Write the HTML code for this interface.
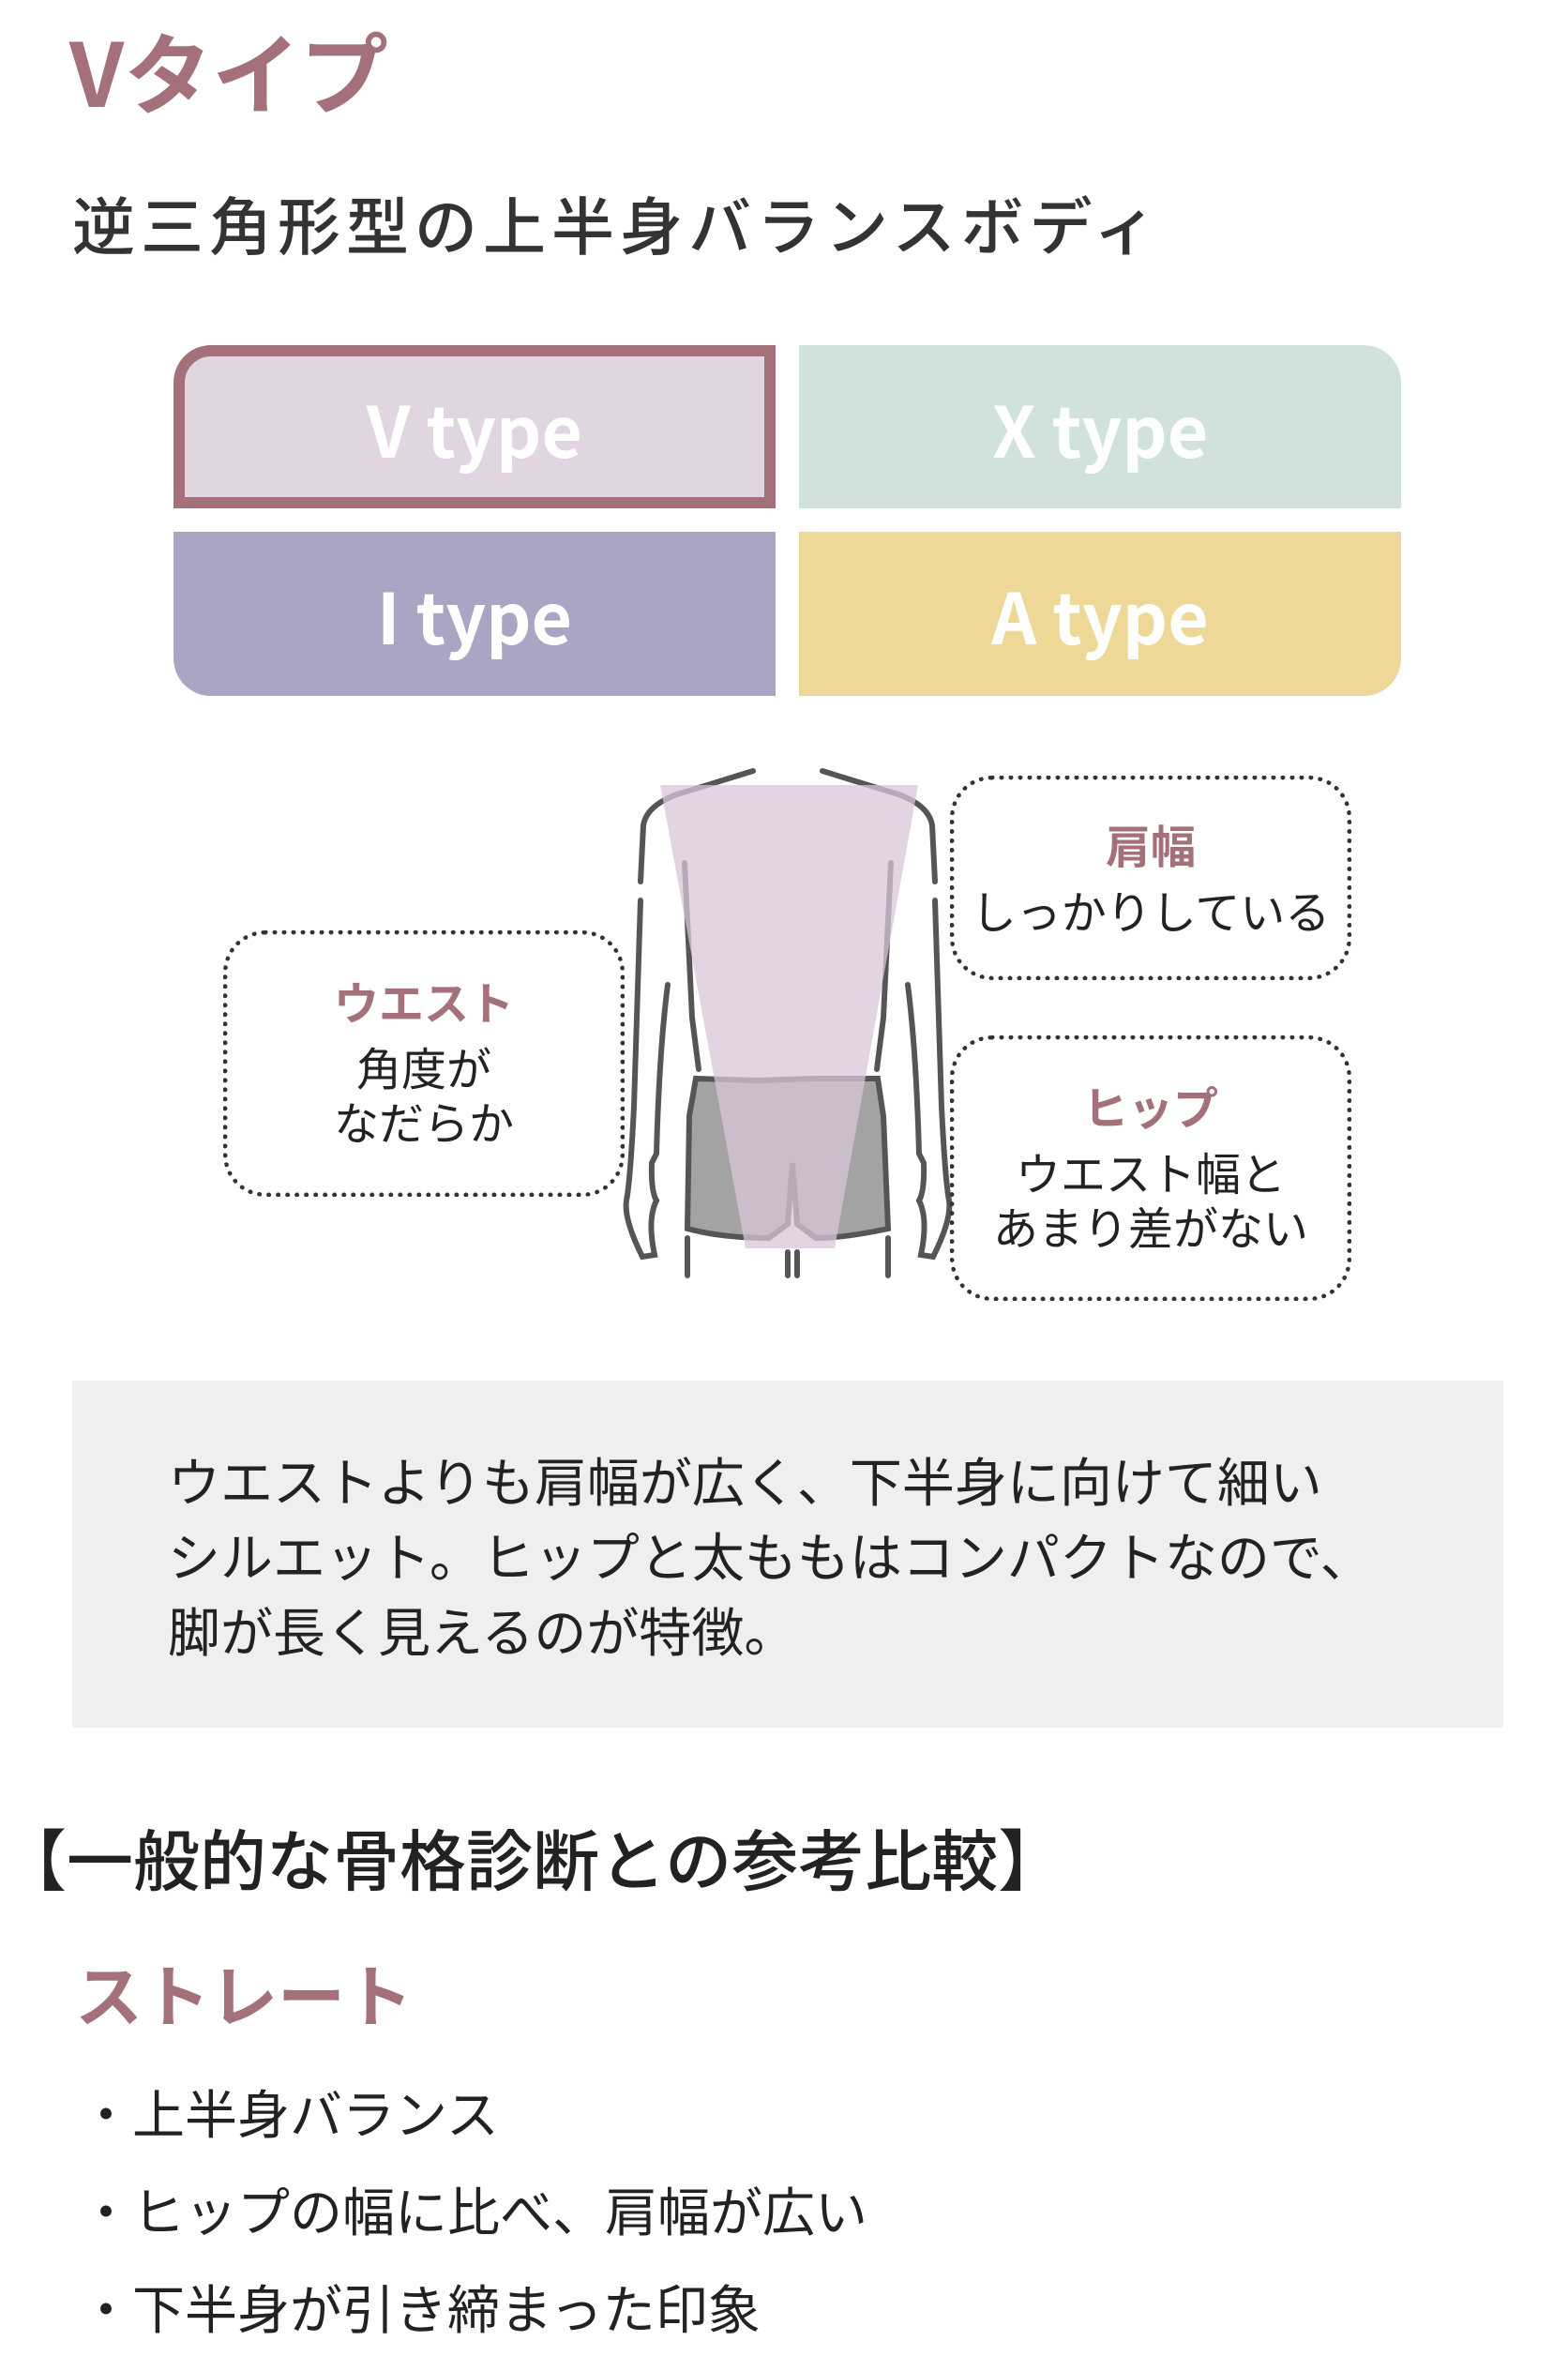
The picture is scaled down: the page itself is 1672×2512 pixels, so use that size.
<!DOCTYPE html>
<html><head><meta charset="utf-8"><style>
*{margin:0;padding:0;box-sizing:border-box}
body{width:1672px;height:2500px;background:#fff;position:relative;overflow:hidden;font-family:"Liberation Sans","Noto Sans CJK JP",sans-serif;color:#333}
.a{position:absolute;white-space:nowrap}
.pk{color:#a4717a;font-weight:bold}
.cell{position:absolute;display:flex;align-items:center;justify-content:center;color:#fff;font-weight:bold;font-size:75px;font-family:"Noto Sans CJK JP",sans-serif}
.bub{position:absolute;border:5px dotted #333;border-radius:45px;text-align:center;font-family:"Noto Sans CJK JP",sans-serif;font-size:48px;line-height:58px;color:#222}
.bub b{color:#a4717a;font-size:48px;display:block;margin-bottom:12px}
.jp{font-family:"Noto Sans CJK JP",sans-serif}
</style></head><body>
<div class="a pk jp" style="left:74px;top:14px;font-size:94px;line-height:120px">Vタイプ</div>
<div class="a jp" style="left:77px;top:195px;font-size:67px;line-height:86px;color:#333;font-weight:500;letter-spacing:6px">逆三角形型の上半身バランスボディ</div>

<div class="cell" style="left:185px;top:368px;width:642px;height:174px;background:#e2d5e2;border:12px solid #a4717a;border-top-left-radius:40px">V type</div>
<div class="cell" style="left:852px;top:368px;width:642px;height:174px;background:#d1e2dc;border-top-right-radius:40px">X type</div>
<div class="cell" style="left:185px;top:567px;width:642px;height:175px;background:#aaa5c3;border-bottom-left-radius:40px">I type</div>
<div class="cell" style="left:852px;top:567px;width:642px;height:175px;background:#edd898;border-bottom-right-radius:40px">A type</div>

<svg class="a" style="left:0;top:0" width="1672" height="1420" viewBox="0 0 1672 1420">
<g fill="none" stroke="#555" stroke-width="6" stroke-linecap="round">
<path d="M803 822 L735 843 Q690 855 686 880 L683 940"/>
<path d="M877 822 L945 843 Q990 855 994 880 L997 940"/>
<path d="M683 960 L676 1180 Q672 1260 668 1280 Q665 1300 685 1340 L698 1338 Q690 1300 700 1280 Q694 1270 695 1240 L700 1230 Q703 1120 712 1050"/>
<path d="M997 960 L1004 1180 Q1008 1260 1012 1280 Q1015 1300 995 1340 L982 1338 Q990 1300 980 1280 Q986 1270 985 1240 L980 1230 Q977 1120 968 1050"/>
<path d="M730 920 L738 1085 L745 1140"/>
<path d="M950 920 L942 1085 L935 1140"/>
<path d="M733 1360 L733 1320 M947 1360 L947 1320 M840 1360 L840 1335 M850 1360 L850 1335"/>
</g>
<path d="M742 1150 L808 1152 L870 1150 L936 1150 L942 1190 L947 1310 Q900 1320 870 1320 L850 1305 L845 1240 L840 1305 L820 1320 Q770 1320 733 1310 L735 1190 Z" fill="#a3a3a3" stroke="#555" stroke-width="6"/>
<path d="M704 837 L979 837 L890 1331 L795 1331 Z" fill="#d8c6d8" opacity="0.75"/>
</svg>

<div class="bub" style="left:238px;top:992px;width:428px;height:284px;padding-top:40px"><b>ウエスト</b>角度が<br>なだらか</div>
<div class="bub" style="left:1013px;top:827px;width:428px;height:218px;padding-top:38px"><b>肩幅</b>しっかりしている</div>
<div class="bub" style="left:1013px;top:1104px;width:428px;height:283px;padding-top:40px"><b>ヒップ</b>ウエスト幅と<br>あまり差がない</div>

<div class="a jp" style="left:77px;top:1472px;width:1526px;height:370px;background:#efefef;padding:66px 0 0 102px;font-size:56px;line-height:80px;color:#222">ウエストよりも肩幅が広く、下半身に向けて細い<br>シルエット。ヒップと太ももはコンパクトなので、<br>脚が長く見えるのが特徴。</div>

<div class="a jp" style="left:0px;top:1934px;font-size:71px;line-height:92px;color:#222;font-weight:500">【一般的な骨格診断との参考比較】</div>
<div class="a pk jp" style="left:80px;top:2078px;font-size:72px;line-height:92px">ストレート</div>
<div class="a jp" style="left:85px;top:2200px;font-size:56px;line-height:104px;color:#222">・上半身バランス<br>・ヒップの幅に比べ、肩幅が広い<br>・下半身が引き締まった印象</div>
</body></html>
